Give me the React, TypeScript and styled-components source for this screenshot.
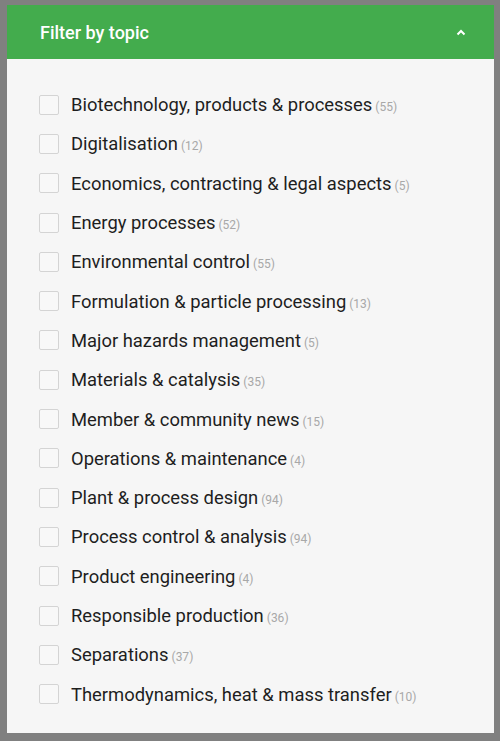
import React from "react";
import styled, { createGlobalStyle } from "styled-components";

const topics: [string, number][] = [
  ["Biotechnology, products & processes", 55],
  ["Digitalisation", 12],
  ["Economics, contracting & legal aspects", 5],
  ["Energy processes", 52],
  ["Environmental control", 55],
  ["Formulation & particle processing", 13],
  ["Major hazards management", 5],
  ["Materials & catalysis", 35],
  ["Member & community news", 15],
  ["Operations & maintenance", 4],
  ["Plant & process design", 94],
  ["Process control & analysis", 94],
  ["Product engineering", 4],
  ["Responsible production", 36],
  ["Separations", 37],
  ["Thermodynamics, heat & mass transfer", 10],
];

const GlobalStyle = createGlobalStyle`
  html, body {
    margin: 0;
    padding: 0;
    background: #808080;
    font-family: Roboto, "Liberation Sans", Arial, sans-serif;
  }
`;

const Frame = styled.div`
  width: 500px;
  height: 741px;
  box-sizing: border-box;
  padding: 5px 6px 8px 7px;
`;

const Panel = styled.div`
  height: 100%;
  display: flex;
  flex-direction: column;
  background: #f6f6f6;
`;

const Header = styled.div`
  height: 54px;
  flex-shrink: 0;
  display: flex;
  align-items: center;
  justify-content: space-between;
  padding: 0 28px 0 33px;
  background: #43ac4d;
  color: #fff;
  font-size: 18px;
  font-weight: 500;
`;

const List = styled.ul`
  list-style: none;
  margin: 0;
  padding: 26px 0 0 32px;
`;

const Row = styled.li`
  height: 39.3px;
  display: flex;
  align-items: center;
  gap: 12px;
`;

const Box = styled.span`
  width: 18px;
  height: 18px;
  flex-shrink: 0;
  border: 1px solid #d4d4d4;
  border-radius: 2px;
  background: #f8f8f8;
`;

const Label = styled.span`
  font-size: 18.4px;
  color: #1e1e1e;
`;

const Count = styled.span`
  margin-left: 3px;
  font-size: 12px;
  color: #a8a8a8;
`;

export default function App() {
  return (
    <>
      <GlobalStyle />
      <Frame>
        <Panel>
          <Header>
            <span>Filter by topic</span>
            <svg width="10" height="7" viewBox="0 0 10 7">
              <path d="M1.5 5.5 L5 2 L8.5 5.5" stroke="#fff" strokeWidth="2" fill="none" />
            </svg>
          </Header>
          <List>
            {topics.map(([name, n]) => (
              <Row key={name}>
                <Box />
                <Label>
                  {name}
                  <Count>({n})</Count>
                </Label>
              </Row>
            ))}
          </List>
        </Panel>
      </Frame>
    </>
  );
}
